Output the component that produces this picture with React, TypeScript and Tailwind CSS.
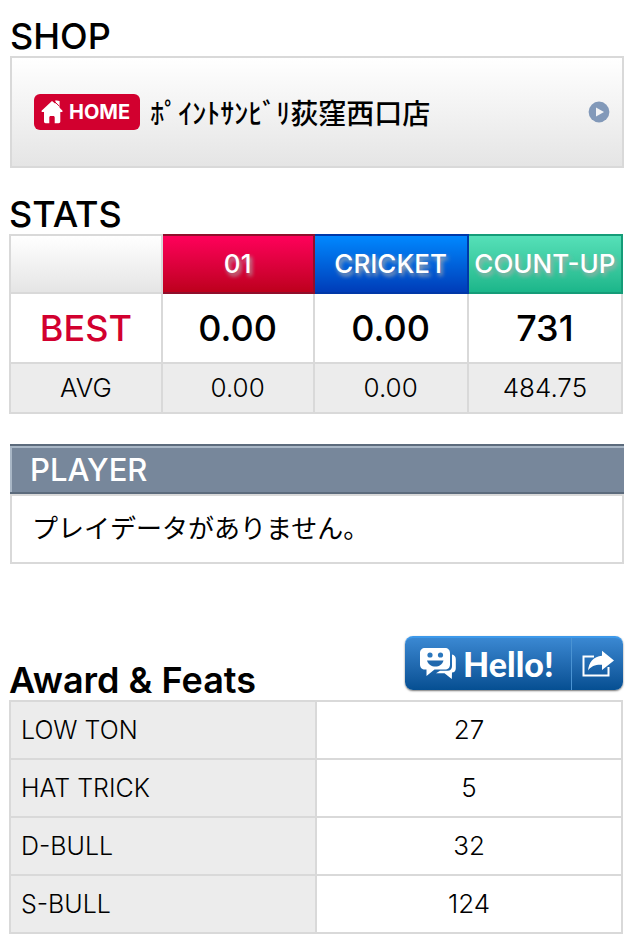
const stats = [
  { name: "01", best: "0.00", avg: "0.00", classNames: "w-[24.8%] border-[#8f0f2b] from-[#ff005a] to-[#bd001c]" },
  { name: "CRICKET", best: "0.00", avg: "0.00", classNames: "border-[#0038a8] from-[#0088ff] to-[#003cb8]" },
  { name: "COUNT-UP", best: "731", avg: "484.75", classNames: "border-[#159c78] from-[#55e0b8] to-[#1ab68a]" },
];

const awards = [
  { name: "LOW TON", count: 27 },
  { name: "HAT TRICK", count: 5 },
  { name: "D-BULL", count: 32 },
  { name: "S-BULL", count: 124 },
];

function Title({ children, classNames = "font-medium" }: { children: React.ReactNode; classNames?: string }) {
  return <h2 className={`text-[36px] leading-[40px] ${classNames}`}>{children}</h2>;
}

function HomeIcon() {
  return (
    <svg width="22" height="24" viewBox="0 0 22 24" fill="#fff" aria-hidden="true">
      <path d="M11 1 0.8 10.4c-.6.7-.2 1.6.7 1.6H3v9.6c0 1 .7 1.7 1.7 1.7h3.6v-5.8c0-.9.5-1.5 1.4-1.5h2.6c.9 0 1.4.6 1.4 1.5v5.8h3.9c1 0 1.7-.7 1.7-1.7V12h1.3c.9 0 1.3-.9.7-1.6L18.6 7.7V1l-4.2-.8v3.6z" />
      <path d="m13.6 1.7 4.9 4.6" stroke="#d2002f" strokeWidth="1" />
    </svg>
  );
}

function ArrowIcon() {
  return (
    <svg width="22" height="22" viewBox="0 0 22 22" aria-hidden="true">
      <circle cx="11" cy="11" r="10.4" fill="#8299b9" />
      <path d="M8 6.5v9l8-4.5z" fill="#f2f3f5" />
    </svg>
  );
}

function ChatIcon() {
  return (
    <svg width="38" height="32" viewBox="0 0 38 32" aria-hidden="true">
      <path d="M33 6.5c2.2.4 3.8 2 3.8 4.4v9.3c0 2.6-1.500 4.3-3.8 4.4l-.2 6.4-7.3-5.8H17l4-2.4h7.500c2.800 0 4.500-1.800 4.500-4.500z" fill="#fff" />
      <path d="M6 0h20c3 0 5 2 5 5v11.500c0 3-2 5-5 5H15.500L7.500 28v-6.500H6c-3 0-5-2-5-5V5c0-3 2-5 5-5z" fill="#fff" />
      <circle cx="11" cy="7" r="2.600" fill="#2b77bd" />
      <circle cx="21.500" cy="7" r="2.600" fill="#2b77bd" />
      <path d="M8 12.500h16.500c-1.200 4-4.400 6-8.200 6s-7-2-8.300-6z" fill="#2169ae" />
    </svg>
  );
}

function ShareIcon() {
  return (
    <svg width="34" height="28" viewBox="0 0 34 28" aria-hidden="true">
      <path d="M13 6.500H2.500v19h25V17" fill="none" stroke="#fff" strokeWidth="2" />
      <path d="M21 .8 33 10.500 21 20v-5.200C15 14.400 10 16 7 20.500 8 12 12.500 6.500 21 5.800z" fill="#fff" />
    </svg>
  );
}

function App() {
  return (
    <main className="bg-white text-black pt-4 pb-3.5 font-['Inter','Noto_Sans_CJK_JP',sans-serif]">
      <section className="pl-[10px] pr-[9px]">
        <Title>SHOP</Title>
        <a href="#shop" className="flex items-center h-28 pl-[22px] pr-3 border-2 border-[#d9d9d9] bg-linear-to-b from-white to-[#e5e5e5]">
          <span className="flex items-center gap-1.5 h-9 pl-[7px] pr-2.5 mr-2.5 rounded-md bg-[#d2002f] text-white text-[20px] font-bold">
            <HomeIcon />
            HOME
          </span>
          <span className="text-[28px] leading-[36px] font-medium font-['Noto_Sans_CJK_JP',sans-serif]">ﾎﾟｲﾝﾄｻﾝﾋﾞﾘ荻窪西口店</span>
          <span className="ml-auto">
            <ArrowIcon />
          </span>
        </a>
      </section>

      <section className="mt-[26px] pl-[9px] pr-[10px]">
        <Title>STATS</Title>
        <table className="w-full table-fixed border-collapse text-center">
          <thead>
            <tr className="h-[58px] text-[26px] leading-[30px]">
              <td className="w-[24.8%] border-2 border-[#d9d9d9] bg-linear-to-b from-white to-[#e5e5e5]"></td>
              {stats.map((s) => (
                <th key={s.name} scope="col" className={`border-2 bg-linear-to-b p-0 font-medium text-white [text-shadow:2px_3px_4px_#aaa] ${s.classNames}`}>
                  {s.name}
                </th>
              ))}
            </tr>
          </thead>
          <tbody>
            <tr className="h-[70px] text-[36px] leading-[40px] font-medium">
              <th scope="row" className="border-2 border-[#d9d9d9] font-medium text-[#d2002f]">BEST</th>
              {stats.map((s) => (
                <td key={s.name} className="border-2 border-[#d9d9d9]">{s.best}</td>
              ))}
            </tr>
            <tr className="h-[50px] bg-[#ececec] text-[26px] leading-[30px] font-light">
              <th scope="row" className="border-2 border-[#d9d9d9] font-light">AVG</th>
              {stats.map((s) => (
                <td key={s.name} className="border-2 border-[#d9d9d9]">{s.avg}</td>
              ))}
            </tr>
          </tbody>
        </table>
      </section>

      <section className="mt-[30px] pl-[10px] pr-[9px]">
        <div className="border-y-2 border-[#5c6b7c]">
          <h2 className="h-[46px] border-t-2 border-l-2 border-[#a9b7c6] bg-[#77879b] pl-[18px] text-[31px] leading-[44px] font-medium text-white">PLAYER</h2>
        </div>
        <p className="h-[70px] border-2 border-[#d9d9d9] pl-5 text-[26px] leading-[66px] font-normal">プレイデータがありません。</p>
      </section>

      <section className="mt-[72px] pl-[9px] pr-[10px]">
        <div className="flex items-end justify-between h-16">
          <Title classNames="font-semibold">Award &amp; Feats</Title>
          <button type="button" className="flex h-[54px] mb-2.5 overflow-hidden rounded-lg border-t-2 border-[#3d99ea] bg-linear-to-b from-[#3a88d2] to-[#054f92] text-white shadow-[0_1px_2px_#777]">
            <span className="flex items-center gap-1.5 h-full w-[166px] pl-3.5 font-['Lato',sans-serif] text-[34px] leading-[40px] font-black">
              <ChatIcon />
              Hello!
            </span>
            <span className="flex items-center justify-center h-full w-[52px] border-l border-[#4a93d3]">
              <ShareIcon />
            </span>
          </button>
        </div>
        <table className="w-full table-fixed border-collapse text-[26px] leading-[30px] font-light">
          <tbody>
            {awards.map((a) => (
              <tr key={a.name} className="h-[58px]">
                <th scope="row" className="border-2 border-[#d9d9d9] bg-[#ececec] pl-2.5 text-left text-[25px] font-light">{a.name}</th>
                <td className="border-2 border-[#d9d9d9] text-center">{a.count}</td>
              </tr>
            ))}
          </tbody>
        </table>
      </section>
    </main>
  );
}

export default App;
